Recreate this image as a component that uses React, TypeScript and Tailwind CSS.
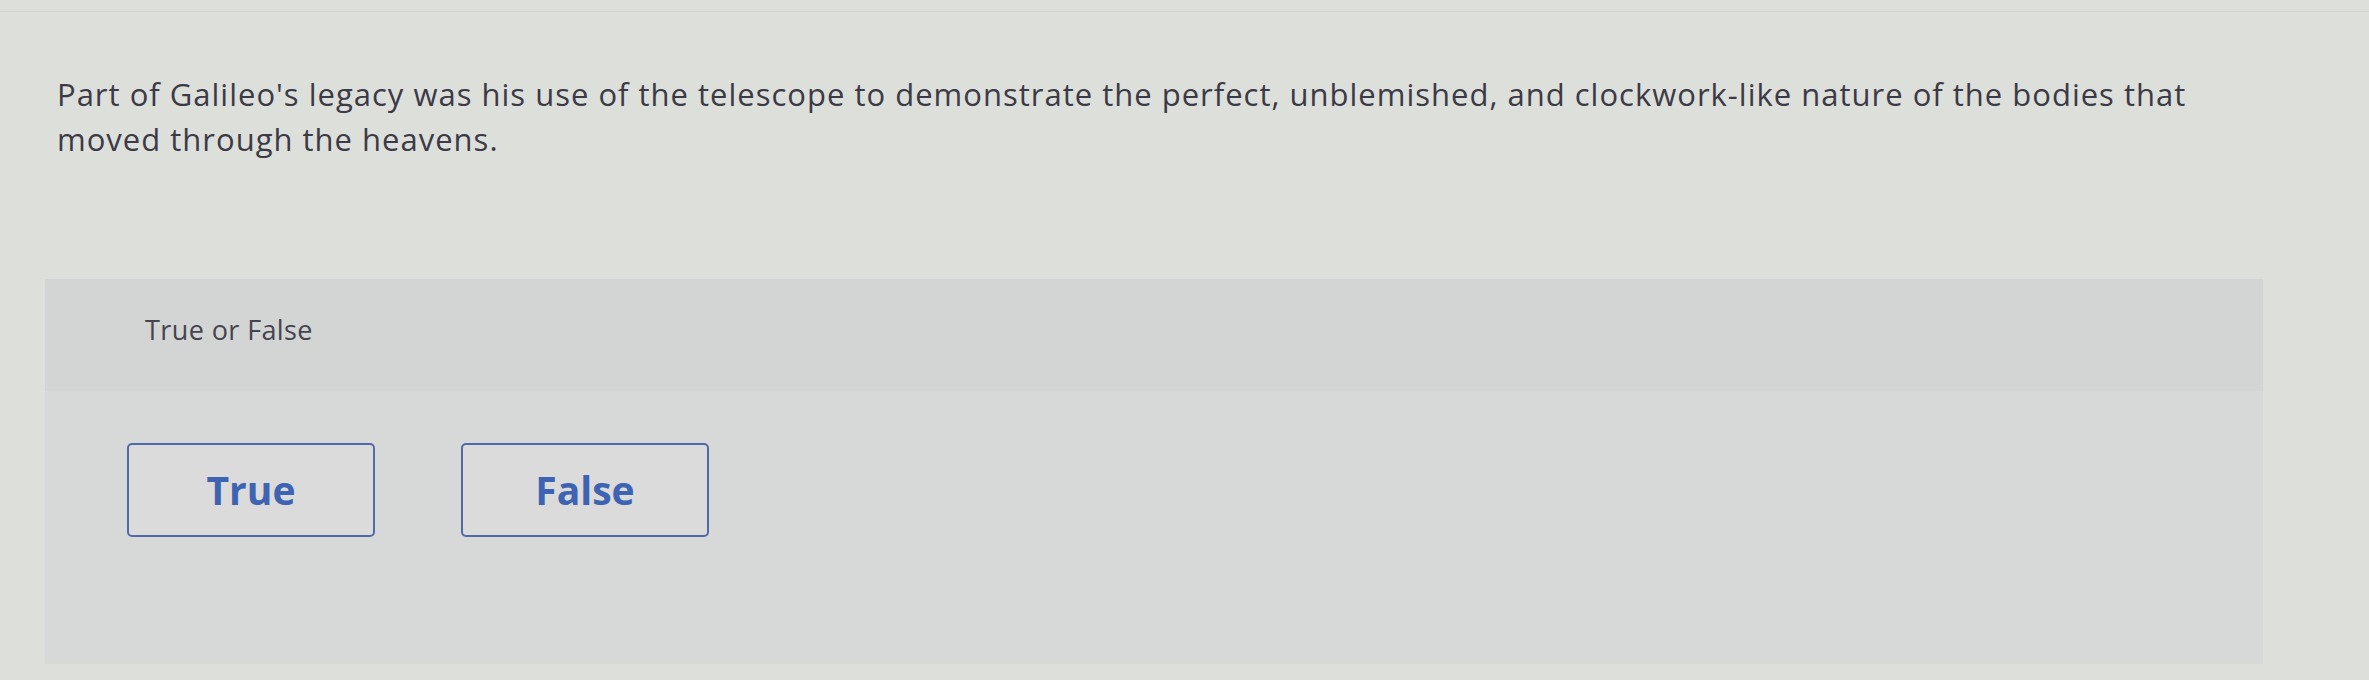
export default function App() {
  const choices = ["True", "False"]

  return (
    <div
      className="w-full h-[680px] overflow-hidden bg-[#dddfdb] text-[#3b3a46]"
      style={{ fontFamily: "'Open Sans', Lato, sans-serif" }}
    >
      <div className="h-[12px] border-b border-[#d0d2ce]" />

      <p className="pl-[57px] pt-[60px] text-[31px] leading-[45px] tracking-[1px] whitespace-nowrap">
        Part of Galileo's legacy was his use of the telescope to demonstrate the perfect, unblemished, and
        clockwork-like nature of the bodies that
        <br />
        moved through the heavens.
      </p>

      <div className="ml-[45px] mt-[117px] w-[2218px] h-[385px] bg-[#d7d8d8] flex flex-col">
        <div className="h-[112px] bg-[#d3d4d4] pl-[100px] pt-[33px]">
          <span className="text-[27px] leading-[36px] tracking-[0.4px] text-[#45444f]">True or False</span>
        </div>

        <div className="flex gap-[86px] pl-[82px] pt-[52px]">
          {choices.map((choice) => (
            <button
              key={choice}
              className="w-[248px] h-[94px] rounded-[5px] border-2 border-[#5069a8] bg-[#dadbda] flex items-center justify-center text-[39px] font-bold text-[#3d63b2]"
            >
              {choice}
            </button>
          ))}
        </div>
      </div>
    </div>
  )
}
